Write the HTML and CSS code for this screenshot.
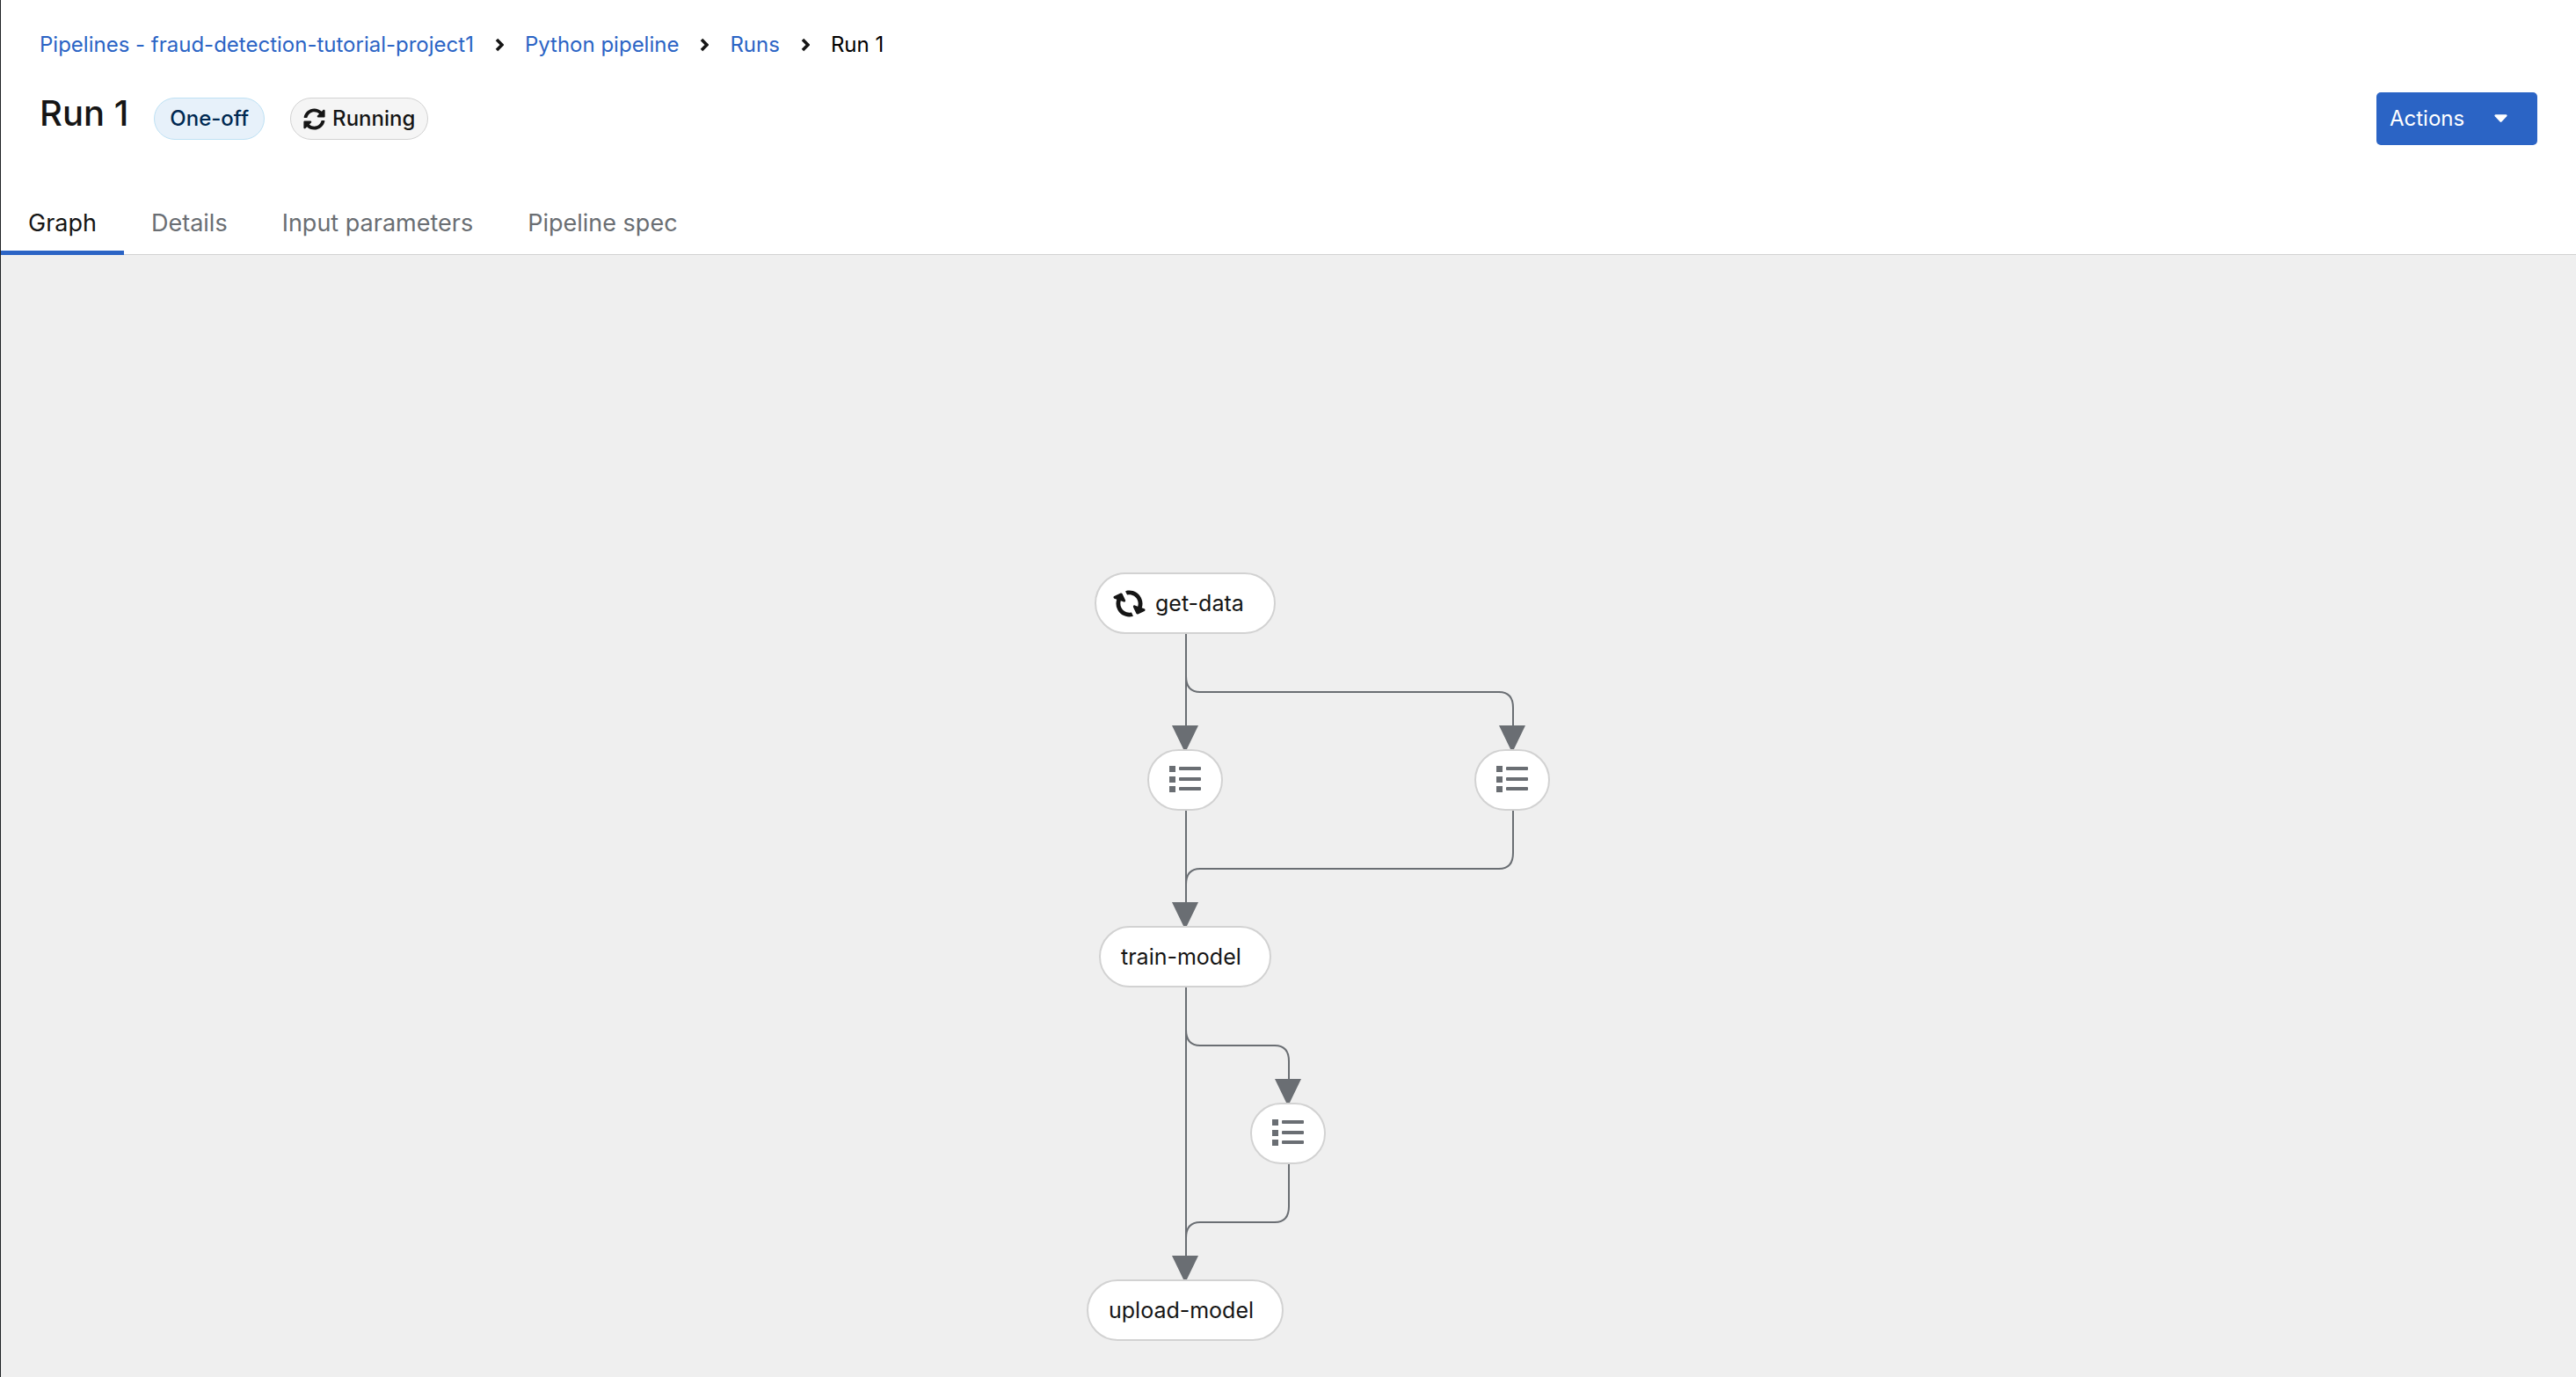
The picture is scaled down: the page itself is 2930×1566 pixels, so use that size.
FILE: index.html
```html
<!DOCTYPE html>
<html lang="en">
<head>
<meta charset="utf-8">
<title>Run 1</title>
<link rel="stylesheet" href="styles.css">
</head>
<body>
<svg class="sprite" aria-hidden="true">
  <symbol id="chevron" viewBox="0 0 10 16"><path d="M2 2l6 6-6 6" fill="none" stroke="currentColor" stroke-width="3.6"/></symbol>
  <symbol id="sync" viewBox="0 0 512 512"><path d="M370.72 133.28C339.458 104.008 298.888 87.962 255.848 88c-77.458.068-144.328 53.178-162.791 126.85-1.344 5.363-6.122 9.15-11.651 9.15H24.103c-7.498 0-13.194-6.807-11.807-14.176C33.933 94.924 134.813 8 256 8c66.448 0 126.791 26.136 171.315 68.685L463.03 40.97C478.149 25.851 504 36.559 504 57.941V192c0 13.255-10.745 24-24 24H345.941c-21.382 0-32.09-25.851-16.971-40.971l41.75-41.749zM32 296h134.059c21.382 0 32.09 25.851 16.971 40.971l-41.75 41.75c31.262 29.273 71.835 45.319 114.876 45.28 77.418-.07 144.315-53.144 162.787-126.849 1.344-5.363 6.122-9.15 11.651-9.15h57.304c7.498 0 13.194 6.807 11.807 14.176C478.067 417.076 377.187 504 256 504c-66.448 0-126.791-26.136-171.315-68.685L48.97 471.03C33.851 486.149 8 475.441 8 454.059V320c0-13.255 10.745-24 24-24z" fill="currentColor"/></symbol>
  <symbol id="list" viewBox="0 0 36 32"><path d="M0 0h7v7H0zM0 12h7v7H0zM0 23h7v7H0z" fill="currentColor"/><path d="M12 1h23q1 0 1 1v2q0 1-1 1H12q-1 0-1-1V2q0-1 1-1zM12 13h23q1 0 1 1v2q0 1-1 1H12q-1 0-1-1v-2q0-1 1-1zM12 24h23q1 0 1 1v2q0 1-1 1H12q-1 0-1-1v-2q0-1 1-1z" fill="currentColor"/></symbol>
</svg>
<div class="page">
  <header class="header">
    <nav class="crumbs" aria-label="Breadcrumb">
      <a href="#">Pipelines - fraud-detection-tutorial-project1</a>
      <svg class="chevron"><use href="#chevron"/></svg>
      <a href="#">Python pipeline</a>
      <svg class="chevron"><use href="#chevron"/></svg>
      <a href="#">Runs</a>
      <svg class="chevron"><use href="#chevron"/></svg>
      <span>Run 1</span>
    </nav>
    <div class="title-row">
      <h1>Run 1</h1>
      <span class="label label-blue">One-off</span>
      <span class="label"><svg class="label-icon"><use href="#sync"/></svg>Running</span>
      <button class="actions" type="button">Actions<svg class="caret" viewBox="0 0 16 10"><path d="M1.5 0h13q1.800.600.700 2L9 8.800q-1 1-2 0L.8 2Q-.3.600 1.500 0z" fill="currentColor"/></svg></button>
    </div>
  </header>
  <div class="tabs" role="tablist">
    <button class="tab tab-current" type="button" role="tab" aria-selected="true">Graph</button>
    <button class="tab" type="button" role="tab">Details</button>
    <button class="tab" type="button" role="tab">Input parameters</button>
    <button class="tab" type="button" role="tab">Pipeline spec</button>
  </div>
  <main class="canvas">
    <div class="diagram">
      <svg class="edges" viewBox="0 0 540 880">
        <g fill="none" stroke="#6a6e73" stroke-width="2">
          <path d="M113 70V176M113 270V378M113 472V780"/>
          <path d="M113 118Q113 136 129 136H469Q485 136 485 154V176"/>
          <path d="M485 270V319Q485 337 469 337H129Q113 337 113 355"/>
          <path d="M113 520Q113 538 129 538H214Q230 538 230 556V578"/>
          <path d="M230 672V721Q230 739 214 739H129Q113 739 113 757"/>
        </g>
        <path d="M97 174h30l-14 29h-2zM469 174h30l-14 29h-2zM97 375h30l-14 29h-2zM214 576h30l-14 29h-2zM97 777h30l-14 29h-2z" fill="#6a6e73"/>
      </svg>
      <div class="node get-data"><svg class="node-sync"><use href="#sync"/></svg>get-data</div>
      <div class="node artifact model-a"><svg class="node-list"><use href="#list"/></svg></div>
      <div class="node artifact model-b"><svg class="node-list"><use href="#list"/></svg></div>
      <div class="node train-model">train-model</div>
      <div class="node artifact model-c"><svg class="node-list"><use href="#list"/></svg></div>
      <div class="node upload-model">upload-model</div>
    </div>
  </main>
</div>
</body>
</html>
```
FILE: styles.css
```css
* { box-sizing: border-box; }
body { margin: 0; background: #fff; color: #151515; font: 24px/36px Inter, "Liberation Sans", sans-serif; }
button { border: 0; margin: 0; background: none; color: inherit; font: inherit; }
.sprite { position: absolute; width: 0; height: 0; }
.page { display: flex; flex-direction: column; min-height: 100vh; border-left: 1px solid #212427; }
.header { padding: 33px 44px 0; }
.crumbs { display: flex; align-items: center; gap: 24px; color: #000; }
.crumbs a { color: #2b64c5; text-decoration: none; }
.chevron { width: 10px; height: 16px; color: #151515; }
.title-row { display: flex; align-items: flex-start; height: 96px; padding-top: 36px; }
h1 { margin: -6px 29px 0 0; font-size: 40px; line-height: 60px; font-weight: 500; }
.label { display: flex; align-items: center; gap: 8px; height: 48px; margin: 6px 29px 0 0; padding: 0 14px; border: 1px solid #d2d2d2; border-radius: 24px; background: #f5f5f5; font-weight: 500; }
.label-blue { padding: 0 17px; border-color: #bee1f4; background: #e7f1fa; color: #002952; }
.label-icon { width: 25px; height: 25px; }
.actions { display: flex; align-items: center; justify-content: space-between; width: 183px; height: 60px; margin-left: auto; padding: 0 34px 0 15px; border-radius: 5px; background: #2b64c5; color: #fff; }
.caret { width: 15px; height: 10px; }
.tabs { display: flex; height: 90px; margin-top: 35px; border-bottom: 1px solid #d2d2d2; }
.tab { height: 90px; padding: 36px 31px 13px; border-bottom: 5px solid transparent; color: #6a6e73; font-size: 27px; line-height: 36px; }
.tab-current { border-color: #2b64c5; color: #151515; }
.canvas { position: relative; flex: 1; min-height: 1276px; background: #efefef; }
.diagram { position: absolute; left: 1235px; top: 361px; width: 540px; height: 880px; font-size: 25px; }
.edges { display: block; width: 540px; height: 880px; }
.node { position: absolute; display: flex; align-items: center; height: 70px; padding-left: 23px; border: 2px solid #d2d2d2; border-radius: 35px; background: #fff; }
.artifact { width: 86px; color: #6a6e73; }
.get-data { left: 9px; top: 0; width: 206px; gap: 12px; padding-left: 20px; }
.train-model { left: 14px; top: 402px; width: 196px; }
.upload-model { left: 0; top: 804px; width: 224px; }
.model-a { left: 69px; top: 201px; }
.model-b { left: 441px; top: 201px; }
.model-c { left: 186px; top: 603px; }
.node-sync { width: 35px; height: 31px; transform: rotate(65deg); }
.node-list { width: 36px; height: 32px; }
```
